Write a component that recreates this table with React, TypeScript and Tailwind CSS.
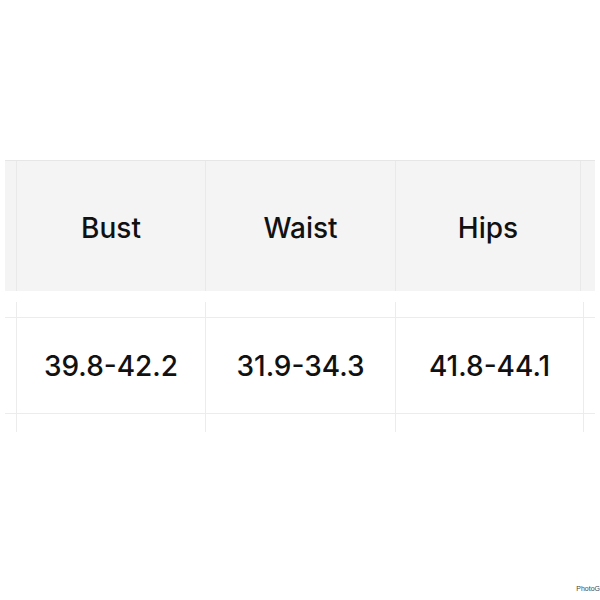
import React from "react";

const cols = [
  { w: 189, label: "Bust", value: "39.8-42.2" },
  { w: 190, label: "Waist", value: "31.9-34.3" },
  { w: 185, label: "Hips", value: "41.8-44.1" },
];

function BodyRow({ className, children }: { className: string; children?: (i: number) => React.ReactNode }) {
  return (
    <div className={`flex ${className}`}>
      <div className="w-[11px]" />
      {cols.map((c, i) => (
        <div
          key={c.label}
          className="border-l border-[#ececec] flex items-center justify-center"
          style={{ width: c.w + (i === 2 ? 3 : 0) }}
        >
          {children ? children(i) : null}
        </div>
      ))}
      <div className="flex-1 border-l border-[#ececec]" />
    </div>
  );
}

export default function App() {
  return (
    <div
      className="relative w-[600px] h-[600px] bg-white text-[#111] overflow-hidden"
      style={{ fontFamily: "Inter, 'Liberation Sans', sans-serif" }}
    >
      <div className="h-[160px]" />

      {/* header */}
      <div className="ml-[5px] w-[590px] h-[131px] bg-[#f4f4f4] border-t border-[#e6e6e6] flex">
        <div className="w-[11px]" />
        {cols.map((c) => (
          <div
            key={c.label}
            className="border-l border-[#e9e9e9] flex items-center justify-center text-[28px] font-medium pt-[4px]"
            style={{ width: c.w }}
          >
            {c.label}
          </div>
        ))}
        <div className="flex-1 border-l border-[#e9e9e9]" />
      </div>

      {/* body */}
      <div className="mt-[11px] ml-[5px] w-[590px]">
        <BodyRow className="h-[15px]" />
        <BodyRow className="h-[97px] border-y border-[#ececec]">
          {(i) => <span className="text-[28px] font-medium">{cols[i].value}</span>}
        </BodyRow>
        <BodyRow className="h-[18px]" />
      </div>

      <div
        className="absolute right-0 top-[585px] text-[7px] leading-none text-[#444]"
        style={{ fontFamily: "'Liberation Sans', sans-serif" }}
      >
        PhotoG
      </div>
    </div>
  );
}
